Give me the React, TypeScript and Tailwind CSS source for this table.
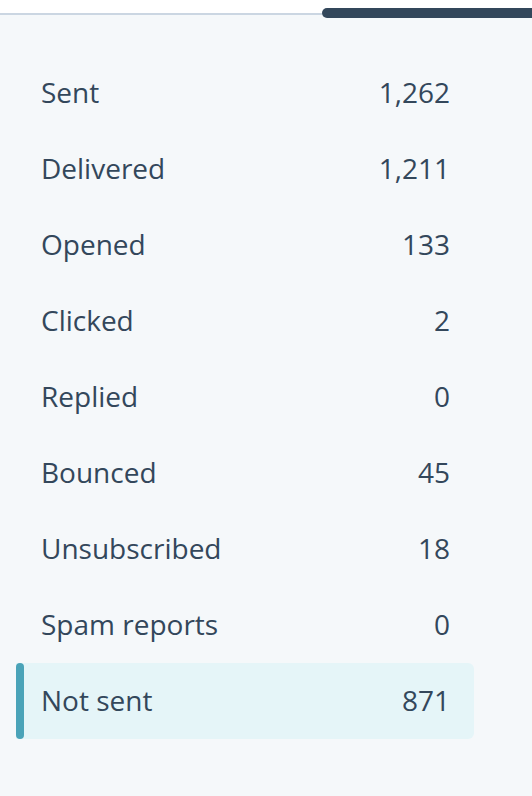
import React from "react";

const rows: [string, string][] = [
  ["Sent", "1,262"],
  ["Delivered", "1,211"],
  ["Opened", "133"],
  ["Clicked", "2"],
  ["Replied", "0"],
  ["Bounced", "45"],
  ["Unsubscribed", "18"],
  ["Spam reports", "0"],
];

export default function App() {
  return (
    <div
      className="w-[532px] h-[796px] bg-[#f5f8fa] text-[#33475b] overflow-hidden"
      style={{ fontFamily: "'Open Sans', 'Noto Sans', sans-serif" }}
    >
      <div className="bg-white h-[15px] flex items-start">
        <div className="flex-1 h-[15px] flex flex-col justify-end">
          <div className="h-[2px] bg-[#cbd6e2]" />
        </div>
        <div className="w-[210px] h-[10px] mt-[8px] bg-[#33475b] rounded-l-[5px]" />
      </div>
      <div className="pt-[40px] pl-[16px] w-[474px] flex flex-col">
        {rows.map(([label, value]) => (
          <div
            key={label}
            className="h-[76px] flex items-center justify-between pl-[25px] pr-[24px] pb-[2px] text-[28px]"
          >
            <span>{label}</span>
            <span>{value}</span>
          </div>
        ))}
        <div className="h-[76px] flex items-stretch bg-[#e5f5f8] rounded-r-[6px] text-[28px]">
          <div className="w-[8px] bg-[#4aa3b8] rounded-full" />
          <div className="flex-1 flex items-center justify-between pl-[17px] pr-[24px] pb-[2px]">
            <span>Not sent</span>
            <span>871</span>
          </div>
        </div>
      </div>
    </div>
  );
}
